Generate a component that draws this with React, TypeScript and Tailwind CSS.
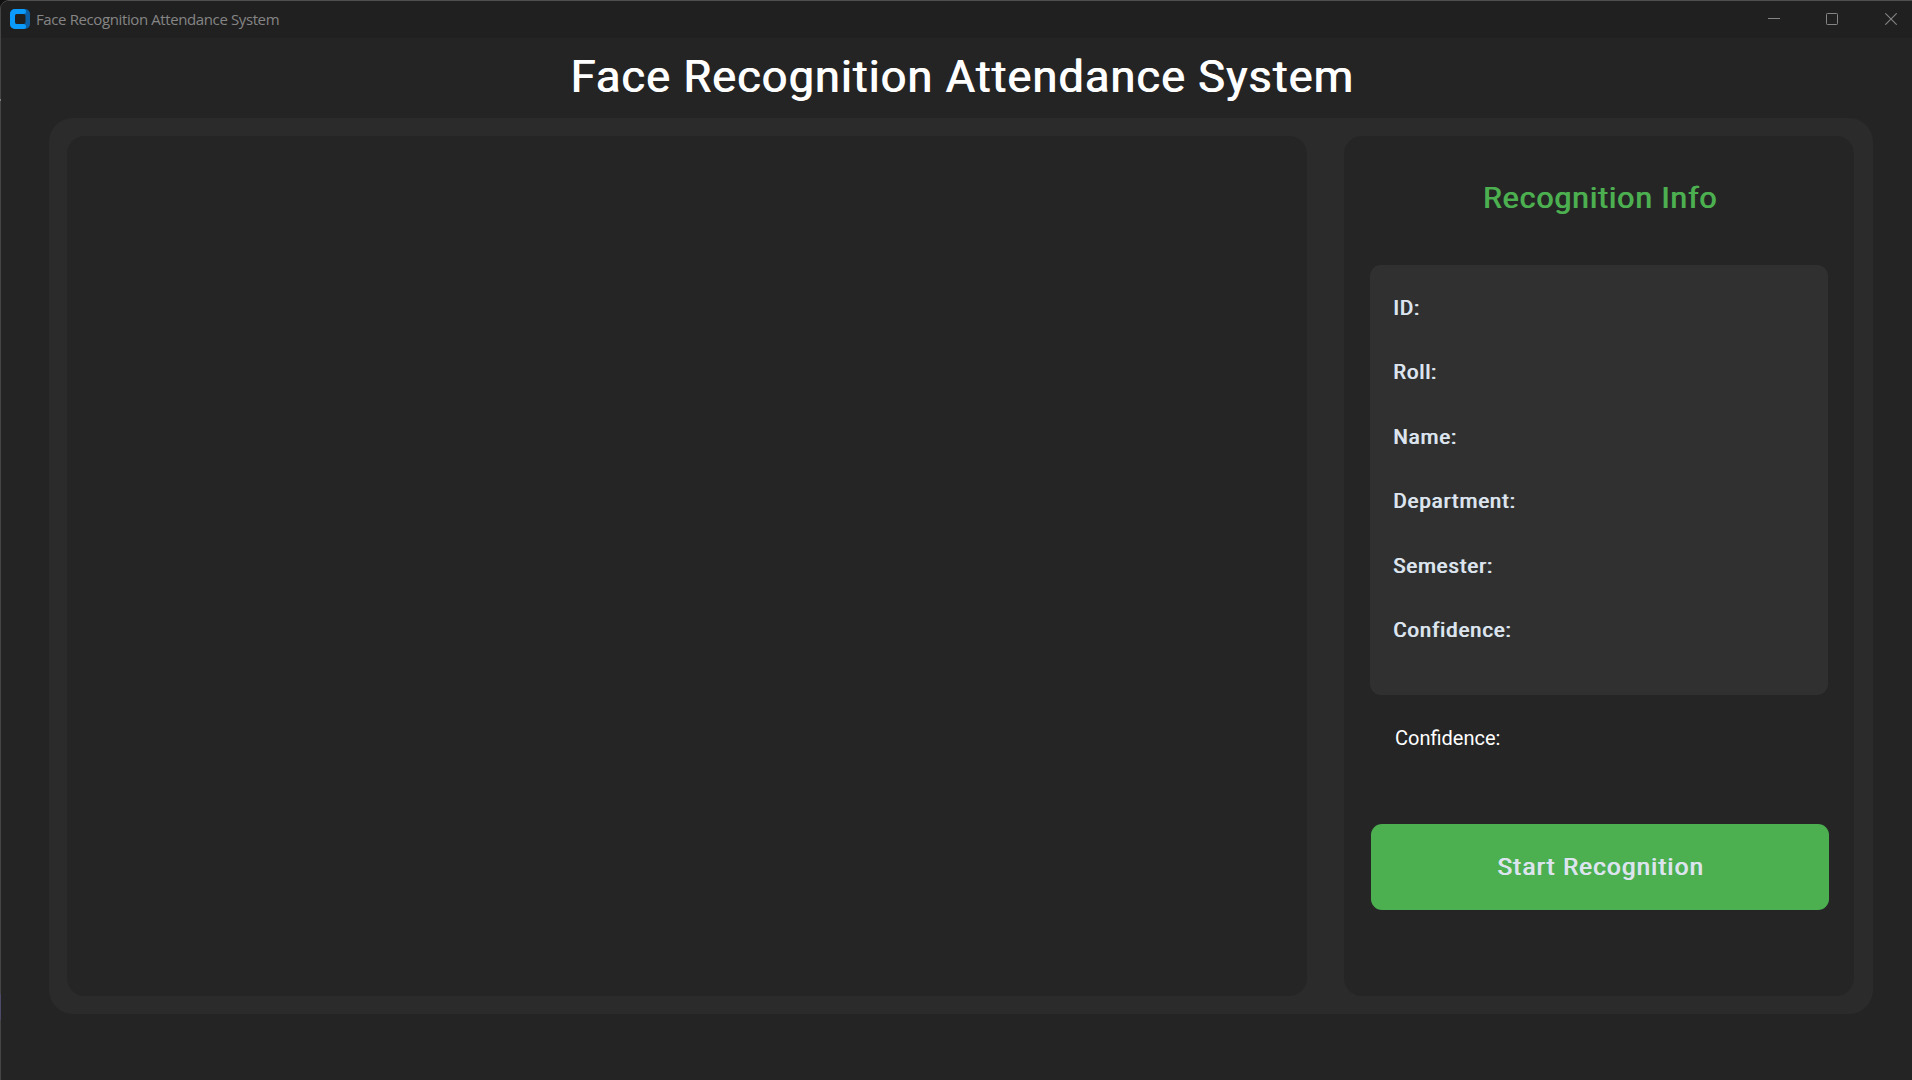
const fields = ["ID:", "Roll:", "Name:", "Department:", "Semester:", "Confidence:"];

function TitleBar() {
  return (
    <header className="flex h-[37px] shrink-0 items-center justify-between bg-[#202020] pr-[15px] pl-[9px] text-[#858585]">
      <div className="-mt-0.5 flex items-center">
        <svg width="20" height="20" viewBox="0 0 20 20">
          <rect width="20" height="20" rx="5" fill="#0a5fa6" />
          <path
            d="M5 0H13.5A2.5 2.5 0 0 1 13.5 5H7A2 2 0 0 0 5 7V13A2 2 0 0 0 7 15H13.5A2.5 2.5 0 0 1 13.5 20H5A5 5 0 0 1 0 15V5A5 5 0 0 1 5 0Z"
            fill="#0a9bfd"
          />
          <rect x="5" y="5" width="10.5" height="10" rx="2" fill="#202020" />
        </svg>
        <span className="ml-1.5 font-['Open_Sans','Noto_Sans',sans-serif] text-[15px] leading-5 tracking-[-0.39px]">
          Face Recognition Attendance System
        </span>
      </div>
      <div className="-mt-px flex items-center gap-[46px]">
        <svg width="12" height="12" viewBox="0 0 12 12" shapeRendering="crispEdges">
          <path d="M0 5.5H12" stroke="currentColor" />
        </svg>
        <svg width="12" height="12" viewBox="0 0 12 12" fill="none">
          <rect x="0.5" y="0.5" width="11" height="11" rx="0.8" stroke="currentColor" />
        </svg>
        <svg width="12" height="12" viewBox="0 0 12 12" fill="none" className="ml-px">
          <path d="M0.3 0.3L11.7 11.7M11.7 0.3L0.3 11.7" stroke="currentColor" strokeWidth="1.1" />
        </svg>
      </div>
    </header>
  );
}

function InfoPanel() {
  return (
    <aside className="flex w-[510px] flex-col rounded-[18px] bg-[#252525] pr-[25px] pl-[26px]">
      <h2 className="mt-[42px] pl-px text-center text-[30px] leading-10 tracking-[1px] text-[#4caf50] [text-shadow:1px_0_currentColor]">
        Recognition Info
      </h2>
      <div className="mt-[47px] mr-px h-[430px] rounded-[11px] bg-[#303030] pt-[11px] pl-[23px]">
        {fields.map((field) => (
          <div
            key={field}
            className="h-[64.4px] text-[20px] leading-[64px] tracking-[1.1px] text-[#dce4ee] [text-shadow:1px_0_currentColor]"
          >
            {field}
          </div>
        ))}
      </div>
      <p className="mt-[28px] pl-[25px] text-[20px] leading-[30px] text-white">Confidence:</p>
      <button className="mt-[71px] ml-px h-[86px] rounded-[11px] bg-[#4caf50] pb-px pl-px text-[24px] leading-8 tracking-[1.28px] text-[#dce4ee] [text-shadow:1px_0_currentColor]">
        Start Recognition
      </button>
    </aside>
  );
}

export default function App() {
  return (
    <div className="h-[1080px] w-[1912px] bg-[#111111]">
      <div className="relative flex h-full flex-col overflow-hidden rounded-tl-[9px] border-t border-l border-t-[#505050] border-l-[#454545] bg-[#242424] font-[Roboto,sans-serif]">
        <TitleBar />
        <h1 className="h-20 shrink-0 pl-[11px] text-center text-[45px] leading-[77px] tracking-[1.1px] text-white [text-shadow:1px_0_currentColor]">
          Face Recognition Attendance System
        </h1>
        <main className="mr-[39px] ml-12 flex h-[896px] shrink-0 justify-between rounded-[24px] bg-[#2b2b2b] py-[18px] pr-[19px] pl-[18px]">
          <section className="w-[1240px] rounded-[18px] bg-[#252525]" />
          <InfoPanel />
        </main>
      </div>
      <div className="absolute top-[994px] left-0 h-[26px] w-px bg-[#4c4a66]" />
      <div className="absolute top-[99px] left-0 h-0.5 w-px bg-[#808080]" />
    </div>
  );
}
